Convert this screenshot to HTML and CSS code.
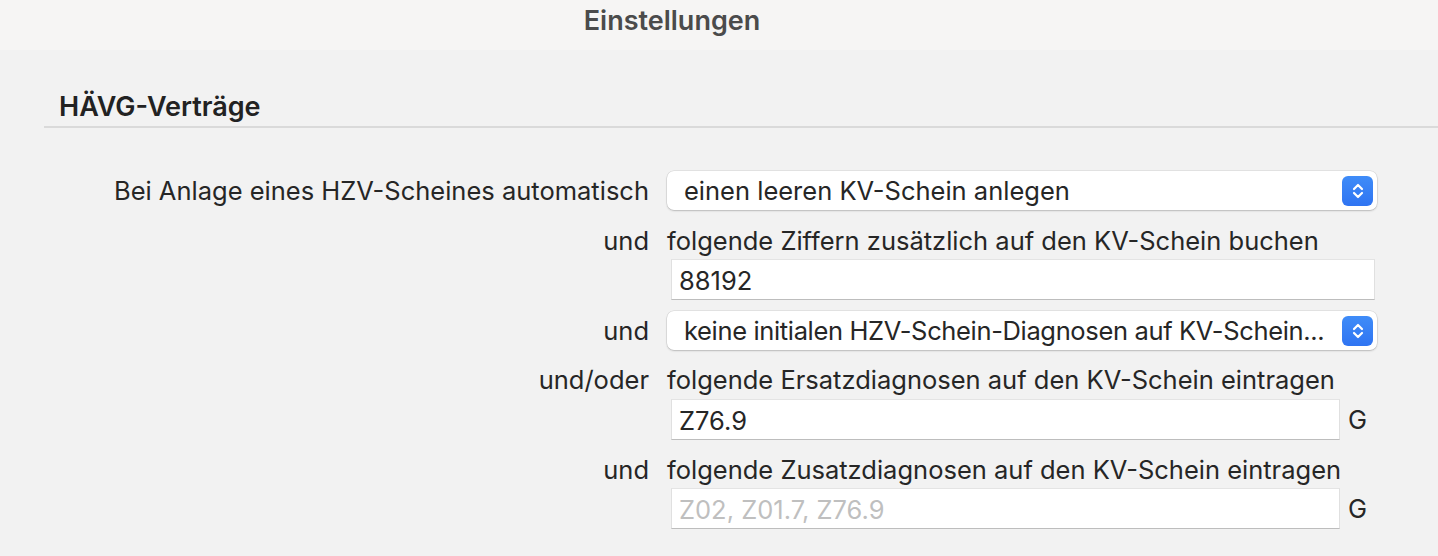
FILE: index.html
```html
<!DOCTYPE html>
<html lang="de">
<head>
    <meta charset="UTF-8">
    <meta name="viewport" content="width=device-width, initial-scale=1.0">
    <title>Einstellungen</title>
    <link rel="stylesheet" href="styles.css">
</head>
<body>

<div class="titlebar">Einstellungen</div>

<div class="pane">
    <h2 class="section-title">HÄVG-Verträge</h2>

    <div class="form">
        <div class="row row-popup">
            <label class="label">Bei Anlage eines HZV-Scheines automatisch</label>
            <div class="popup">
                <span class="popup-text">einen leeren KV-Schein anlegen</span>
                <span class="stepper">
                    <svg width="14" height="20" viewBox="0 0 14 20"><path d="M3 8 L7 4 L11 8 M3 12 L7 16 L11 12" fill="none" stroke="#fff" stroke-width="2.2" stroke-linecap="round" stroke-linejoin="round"/></svg>
                </span>
            </div>
        </div>

        <div class="row row-text gap-a">
            <span class="label">und</span>
            <span class="text">folgende Ziffern zusätzlich auf den KV-Schein buchen</span>
        </div>
        <div class="row row-field gap-b">
            <span class="label"></span>
            <div class="field wide">88192</div>
        </div>

        <div class="row row-popup gap-c">
            <span class="label">und</span>
            <div class="popup">
                <span class="popup-text tight">keine initialen HZV-Schein-Diagnosen auf KV-Schein...</span>
                <span class="stepper">
                    <svg width="14" height="20" viewBox="0 0 14 20"><path d="M3 8 L7 4 L11 8 M3 12 L7 16 L11 12" fill="none" stroke="#fff" stroke-width="2.2" stroke-linecap="round" stroke-linejoin="round"/></svg>
                </span>
            </div>
        </div>

        <div class="row row-text gap-d">
            <span class="label">und/oder</span>
            <span class="text">folgende Ersatzdiagnosen auf den KV-Schein eintragen</span>
        </div>
        <div class="row row-field gap-e">
            <span class="label"></span>
            <div class="field-line">
                <div class="field narrow">Z76.9</div>
                <span class="suffix">G</span>
            </div>
        </div>

        <div class="row row-text gap-d">
            <span class="label">und</span>
            <span class="text">folgende Zusatzdiagnosen auf den KV-Schein eintragen</span>
        </div>
        <div class="row row-field gap-b">
            <span class="label"></span>
            <div class="field-line">
                <div class="field narrow placeholder">Z02, Z01.7, Z76.9</div>
                <span class="suffix">G</span>
            </div>
        </div>

        <div class="next-line">Abrechnung bei Wechsel des Quartals</div>
    </div>
</div>

</body>
</html>
```

FILE: styles.css
```css
/* General Styling */
* {
    margin: 0;
    padding: 0;
    box-sizing: border-box;
}

html, body {
    height: 100%;
    overflow: hidden;
}

body {
    font-family: 'Inter', 'Liberation Sans', sans-serif;
    background: #f2f2f2;
    color: #262626;
    font-size: 25.5px;
}

/* Window title (centred on the wider window) */
.titlebar {
    height: 50px;
    background: #f6f5f4;
    text-align: center;
    line-height: 41px;
    font-size: 27px;
    font-weight: 600;
    color: #4b4b4b;
    padding-right: 94px;
}

/* Pane */
.pane {
    padding-left: 44px;
}

.section-title {
    font-size: 27px;
    font-weight: 600;
    color: #222;
    padding: 40px 0 0 15px;
    height: 78px;
    border-bottom: 2px solid #dadada;
}

/* Form rows */
.form {
    padding-top: 43px;
}

.row {
    display: grid;
    grid-template-columns: 605px 1fr;
    column-gap: 18px;
    align-items: center;
}

.label {
    text-align: right;
    white-space: nowrap;
}

.row-popup { height: 39px; }
.row-text { height: 26px; line-height: 26px; }
.row-field { height: 41px; }

.gap-a { margin-top: 18px; }
.gap-b { margin-top: 5px; }
.gap-c { margin-top: 11px; }
.gap-d { margin-top: 17px; }
.gap-e { margin-top: 6px; }

/* Popup button */
.popup {
    width: 710px;
    height: 39px;
    background: #fff;
    border-radius: 7px;
    box-shadow: 0 0 0 0.5px rgba(0, 0, 0, 0.12), 0 1px 2px rgba(0, 0, 0, 0.18);
    display: flex;
    align-items: center;
    justify-content: space-between;
    gap: 10px;
    padding: 0 4px 0 17px;
}

.popup-text {
    white-space: nowrap;
    overflow: hidden;
}

.popup-text.tight {
    letter-spacing: -0.35px;
}

.stepper {
    width: 31px;
    height: 30px;
    border-radius: 6px;
    background: linear-gradient(#3f8cf8, #2f74f2);
    display: flex;
    align-items: center;
    justify-content: center;
    flex-shrink: 0;
}

/* Text fields */
.field-line {
    display: flex;
    align-items: center;
    gap: 8px;
    margin-left: 4px;
}

.field {
    height: 41px;
    background: #fff;
    border-top: 1px solid #e4e4e4;
    border-bottom: 1px solid #bdbdbd;
    border-left: 1px solid #e0e0e0;
    border-right: 1px solid #e0e0e0;
    padding: 2px 7px 0;
    line-height: 38px;
}

.field.wide {
    width: 704px;
    margin-left: 4px;
}

.field.narrow {
    width: 669px;
}

.placeholder {
    color: #bfbfbf;
}

.suffix {
    color: #262626;
}

/* Next row, cut by the window edge */
.next-line {
    margin-top: 25px;
    padding-left: 119px;
    line-height: 26px;
    white-space: nowrap;
}
```
